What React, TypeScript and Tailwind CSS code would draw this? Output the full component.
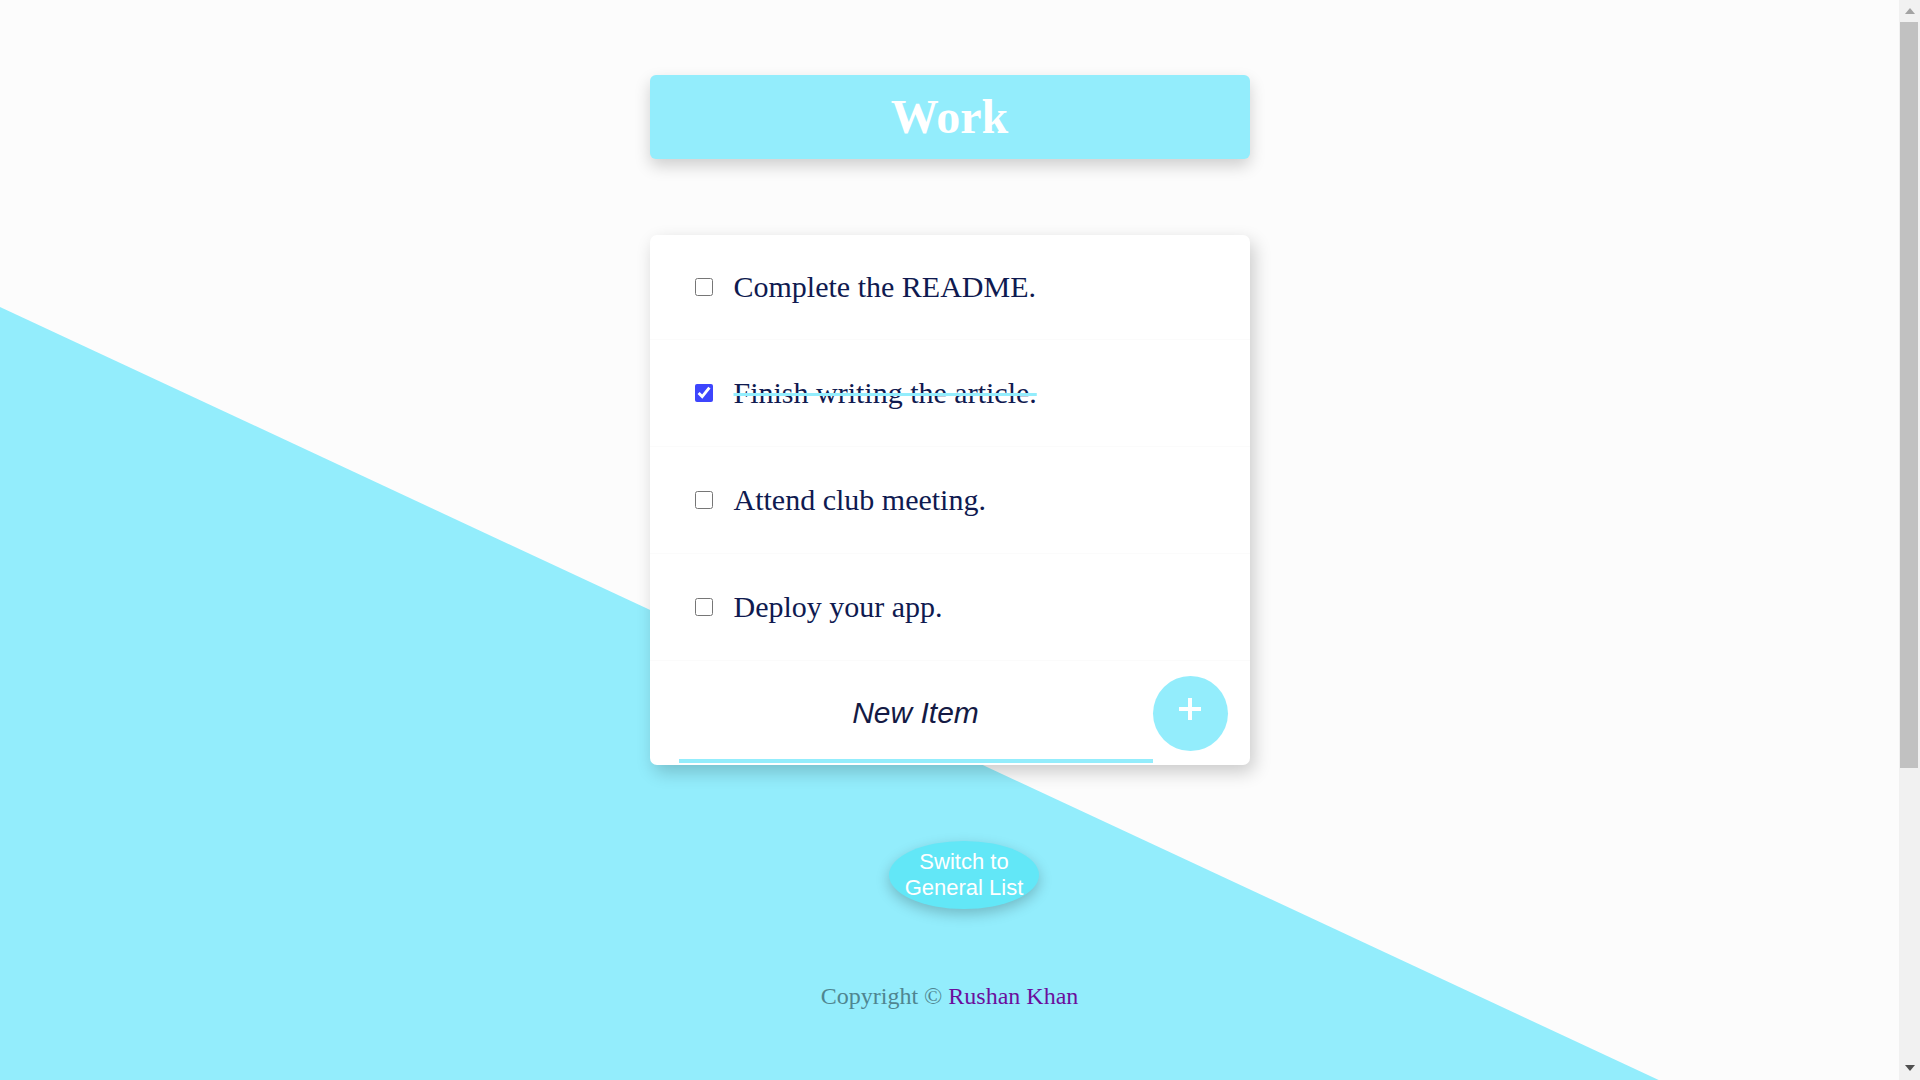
import React from "react";

const items = [
  { text: "Complete the README.", done: false },
  { text: "Finish writing the article.", done: true },
  { text: "Attend club meeting.", done: false },
  { text: "Deploy your app.", done: false },
];

export default function App() {
  return (
    <div className="flex h-screen w-full overflow-hidden bg-[#fcfcfc]">
      <div className="relative flex-1 h-[1515px] overflow-hidden">
        {/* diagonal background */}
        <div className="absolute inset-0 bg-[#93edfc] [clip-path:polygon(0_307px,100%_1192px,100%_100%,0_100%)]" />

        <div className="relative flex flex-col items-center">
          {/* Heading */}
          <div className="mt-[75px] w-[600px] h-[84px] rounded-[6px] bg-[#93edfc] flex items-center justify-center shadow-[0_7px_16px_rgba(0,0,0,0.18)]">
            <h1 className="m-0 text-white font-bold text-[48px] leading-none font-['Liberation_Serif',serif]">
              Work
            </h1>
          </div>

          {/* Card */}
          <div className="mt-[76px] w-[600px] h-[530px] rounded-[7px] bg-white shadow-[4px_7px_18px_rgba(0,0,0,0.2)] flex flex-col">
            {items.map((it, i) => (
              <div
                key={i}
                className={
                  "flex items-center border-b border-[#fbfbfb] " +
                  (i === 0 ? "h-[105px]" : "h-[107px]")
                }
              >
                <input
                  type="checkbox"
                  defaultChecked={it.done}
                  className="my-0 mr-0 ml-[45px] w-[18px] h-[18px] accent-[#3d45fd] shrink-0"
                />
                <p
                  className={
                    "m-0 ml-[21px] text-[30px] leading-none text-[#0f1a50] font-['Liberation_Serif',serif] " +
                    (it.done ? "line-through decoration-[#93edfc] decoration-[3px]" : "")
                  }
                >
                  {it.text}
                </p>
              </div>
            ))}
            <div className="flex items-center h-[104px]">
              <input
                type="text"
                placeholder="New Item"
                className="ml-[29px] w-[474px] h-[96px] mt-[4px] border-0 border-b-4 border-[#93edfc] bg-transparent text-center text-[30px] italic outline-none text-[#141a44] placeholder:text-[#141a44] font-['Liberation_Sans',sans-serif]"
              />
              <button className="ml-0 w-[75px] h-[75px] rounded-full bg-[#93edfc] flex items-center justify-center shrink-0">
                <svg width="22" height="22" viewBox="0 0 22 22" className="-mt-[8px]">
                  <rect x="9" y="0" width="4" height="22" fill="white" />
                  <rect x="0" y="9" width="22" height="4" fill="white" />
                </svg>
              </button>
            </div>
          </div>

          {/* Switch button */}
          <button className="mt-[76px] ml-[29px] w-[150px] h-[68px] rounded-[50%] bg-[#62e7f7] text-white text-[22px] leading-[26px] font-['Liberation_Sans',sans-serif] shadow-[0_5px_14px_rgba(0,0,0,0.22)]">
            Switch to
            <br />
            General List
          </button>

          {/* Footer */}
          <p className="mt-[69px] text-[24px] font-['Liberation_Serif',serif] text-[#4f8590]">
            Copyright © <a className="text-[#6b0f9c]" href="#">Rushan Khan</a>
          </p>
        </div>
      </div>

      {/* Scrollbar */}
      <div className="w-[21px] h-screen bg-[#f1f1f1] flex flex-col items-start shrink-0">
        <div className="h-[22px] w-full flex items-center justify-center pl-[1px]">
          <svg width="10" height="6" viewBox="0 0 10 6">
            <polygon points="5,0 10,6 0,6" fill="#a3a3a3" />
          </svg>
        </div>
        <div className="ml-[1px] w-[18px] h-[746px] bg-[#c1c1c1]" />
        <div className="flex-1" />
        <div className="h-[22px] w-full flex items-center justify-center pl-[1px] pb-[2px]">
          <svg width="10" height="6" viewBox="0 0 10 6">
            <polygon points="0,0 10,0 5,6" fill="#505050" />
          </svg>
        </div>
      </div>
    </div>
  );
}
